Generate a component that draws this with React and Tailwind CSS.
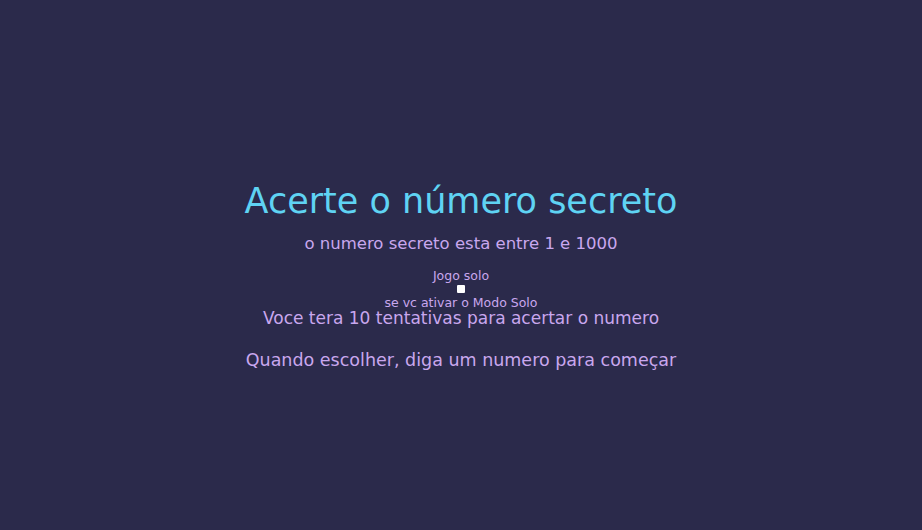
export default function App() {
  return (
    <div
      className="h-[530px] w-full bg-[#2b2a4b] flex flex-col items-center justify-center pt-[19px] text-center"
      style={{ fontFamily: '"DejaVu Sans", sans-serif' }}
    >
      <h1 className="text-[35px] leading-[44px] text-[#5fd3f3]">Acerte o número secreto</h1>
      <p className="mt-[10px] text-[16.5px] leading-[22px] text-[#c9a7ee]">o numero secreto esta entre 1 e 1000</p>
      <div className="mt-[14px] flex flex-col items-center text-[12.5px] text-[#c9a7ee]">
        <label className="leading-[14px]">Jogo solo</label>
        <span className="w-[8px] h-[8px] bg-white rounded-[1px] mt-[2px] mb-[4px]"></span>
        <span className="leading-[12px]">se vc ativar o Modo Solo</span>
      </div>
      <p className="text-[17px] leading-[18px] text-[#c9a7ee]">Voce tera 10 tentativas para acertar o numero</p>
      <p className="mt-[23px] text-[17.5px] leading-[20px] text-[#c9a7ee]">Quando escolher, diga um numero para começar</p>
    </div>
  );
}
